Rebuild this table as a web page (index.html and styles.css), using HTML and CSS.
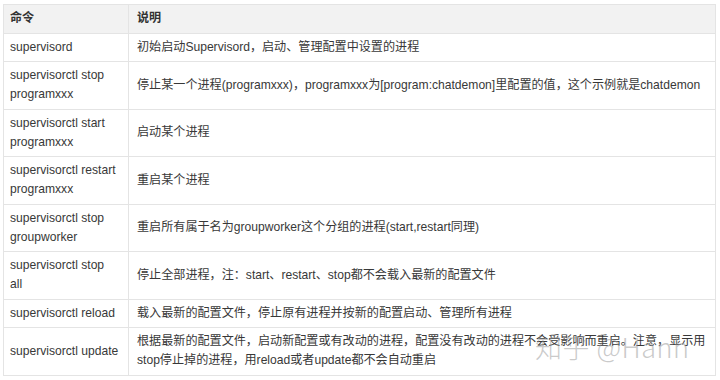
FILE: index.html
```html
<!DOCTYPE html>
<html lang="zh-CN">
<head>
<meta charset="utf-8">
<title>supervisorctl</title>
<link rel="stylesheet" href="styles.css">
</head>
<body>
<div class="wrap">
  <table class="cmd-table">
    <colgroup><col class="c1"><col class="c2"></colgroup>
    <thead>
      <tr><th>命令</th><th>说明</th></tr>
    </thead>
    <tbody>
      <tr><td>supervisord</td><td>初始启动Supervisord，启动、管理配置中设置的进程</td></tr>
      <tr><td>supervisorctl stop<br>programxxx</td><td>停止某一个进程(programxxx)，programxxx为[program:chatdemon]里配置的值，这个示例就是chatdemon</td></tr>
      <tr><td>supervisorctl start<br>programxxx</td><td>启动某个进程</td></tr>
      <tr><td>supervisorctl restart<br>programxxx</td><td>重启某个进程</td></tr>
      <tr><td>supervisorctl stop<br>groupworker</td><td>重启所有属于名为groupworker这个分组的进程(start,restart同理)</td></tr>
      <tr><td>supervisorctl stop<br>all</td><td>停止全部进程，注：start、restart、stop都不会载入最新的配置文件</td></tr>
      <tr><td>supervisorctl reload</td><td>载入最新的配置文件，停止原有进程并按新的配置启动、管理所有进程</td></tr>
      <tr><td>supervisorctl update</td><td>根据最新的配置文件，启动新配置或有改动的进程，配置没有改动的进程不会受影响而重启。注意，显示用<br>stop停止掉的进程，用reload或者update都不会自动重启</td></tr>
    </tbody>
  </table>
  <div class="watermark">知乎 @Hanh</div>
</div>
</body>
</html>
```
FILE: styles.css
```css
html, body {
  margin: 0;
  padding: 0;
  background: #ffffff;
}
body {
  font-family: "Liberation Sans", "Noto Sans CJK SC", sans-serif;
  font-size: 12.1px;
  color: #383838;
}
.wrap {
  position: relative;
  padding: 4px 0 0 3px;
  width: 713px;
}
.cmd-table {
  width: 713px;
  border-collapse: collapse;
  table-layout: fixed;
  border: 1px solid #e4e4e4;
}
.c1 { width: 125px; }
.cmd-table th,
.cmd-table td {
  border: 1px solid #e4e4e4;
  padding: 4.25px 8px;
  line-height: 19px;
  text-align: left;
  vertical-align: middle;
  white-space: nowrap;
}
.cmd-table th:first-child,
.cmd-table td:first-child {
  padding-left: 6px;
  padding-right: 4px;
}
.cmd-table th {
  background: #f2f2f2;
  font-weight: 600;
  color: #333;
}
.watermark {
  position: absolute;
  left: 535px;
  top: 329px;
  font-family: "Noto Sans CJK SC", "Liberation Sans", sans-serif;
  font-size: 27px;
  line-height: 36px;
  font-weight: 300;
  color: rgba(150, 150, 150, 0.5);
  letter-spacing: 0.5px;
  white-space: nowrap;
}
```
